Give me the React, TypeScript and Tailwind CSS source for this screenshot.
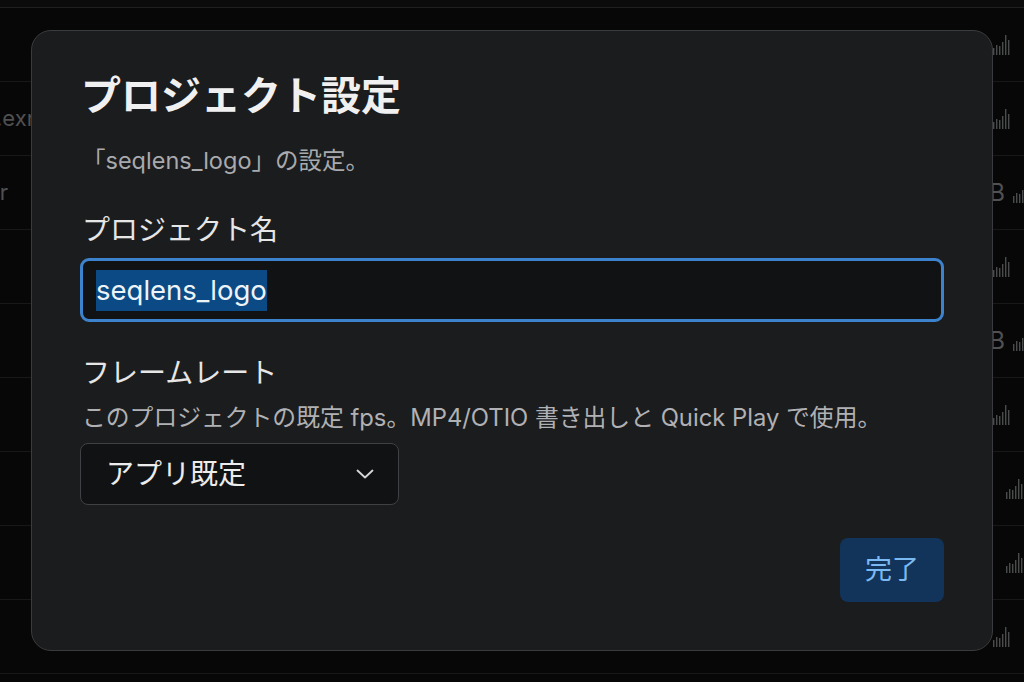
import React from "react";

const FONT = { fontFamily: '"Inter", "Noto Sans CJK JP", "Noto Sans", sans-serif' };

function Wave({ className = "" }: { className?: string }) {
  const bars = [7, 10, 9, 13, 20, 15];
  return (
    <svg width="17" height="20" viewBox="0 0 17 20" className={className}>
      {bars.map((h, i) => (
        <rect key={i} x={i * 3} y={20 - h} width="1.4" height={h} fill="#4a4b4d" />
      ))}
    </svg>
  );
}

type Row = { left?: string; leftW?: number; right: "wave" | "size"; rightPad: number };

const rows: Row[] = [
  { right: "wave", rightPad: 14 },
  { left: "frame_0001.exr", leftW: 35, right: "wave", rightPad: 14 },
  { left: "folder", leftW: 8, right: "size", rightPad: 0 },
  { right: "wave", rightPad: 14 },
  { right: "size", rightPad: 0 },
  { right: "wave", rightPad: 14 },
  { right: "wave", rightPad: 1 },
  { right: "wave", rightPad: 1 },
  { right: "wave", rightPad: 14 },
];

export default function App() {
  return (
    <div className="relative w-[1024px] h-[682px] overflow-hidden bg-[#070708]" style={FONT}>
      {/* background list */}
      <div className="flex flex-col">
        <div className="h-[8px] bg-[#0b0b0c] border-b border-[#1e1f21]" />
        {rows.map((r, i) => (
          <div key={i} className="h-[74px] flex items-center justify-between border-b border-[#17181a]">
            <div className="flex justify-end overflow-hidden whitespace-nowrap text-[22px] text-[#4f5052]" style={{ width: r.leftW ?? 0 }}>
              {r.left ?? ""}
            </div>
            {r.right === "wave" ? (
              <div className="flex items-center" style={{ paddingRight: r.rightPad }}>
                <Wave />
              </div>
            ) : (
              <div className="flex items-center gap-[8px] -mr-[6px]">
                <span className="text-[24px] text-[#505153]">MB</span>
                <Wave />
              </div>
            )}
          </div>
        ))}
      </div>

      {/* dialog */}
      <div className="absolute left-[31px] top-[30px] w-[962px] h-[621px] rounded-[20px] border border-[#3a3b3e] bg-[#1b1c1e] px-[48px] pt-[41px] flex flex-col">
        <h1 className="text-[40px] font-bold leading-[48px] text-[#f0f0f1] pl-[1px]">プロジェクト設定</h1>
        <p className="mt-[25px] text-[23.5px] leading-[32px] text-[#a9aaad] pl-[2px]">「seqlens_logo」の設定。</p>

        <label className="mt-[35px] text-[28px] leading-[36px] text-[#e6e6e7] pl-[2px]">プロジェクト名</label>
        <div className="mt-[10px] h-[64px] rounded-[9px] border-[3px] border-[#3d82cc] bg-[#111214] flex items-center pl-[13px]">
          <span className="bg-[#0b4a85] text-[#eef3f8] text-[27.5px] leading-[41px]">seqlens_logo</span>
        </div>

        <label className="mt-[33px] text-[28px] leading-[36px] text-[#e6e6e7] pl-[2px]">フレームレート</label>
        <p className="mt-[11px] text-[23.8px] leading-[32px] text-[#b0b1b4] pl-[2px]">
          このプロジェクトの既定 fps。MP4/OTIO 書き出しと Quick Play で使用。
        </p>
        <div className="mt-[9px] w-[319px] h-[62px] rounded-[8px] border border-[#3f4144] bg-[#111214] flex items-center justify-between pl-[25px] pr-[24px]">
          <span className="text-[28px] text-[#ececed]">アプリ既定</span>
          <svg width="18" height="10" viewBox="0 0 18 10" fill="none">
            <path d="M1.5 1.5 L9 8.5 L16.5 1.5" stroke="#d8d8da" strokeWidth="1.8" strokeLinecap="round" strokeLinejoin="round" />
          </svg>
        </div>

        <div className="mt-[33px] flex justify-end">
          <button className="w-[104px] h-[64px] rounded-[8px] bg-[#12345a] text-[#7bb9f2] text-[27px]">完了</button>
        </div>
      </div>
    </div>
  );
}
